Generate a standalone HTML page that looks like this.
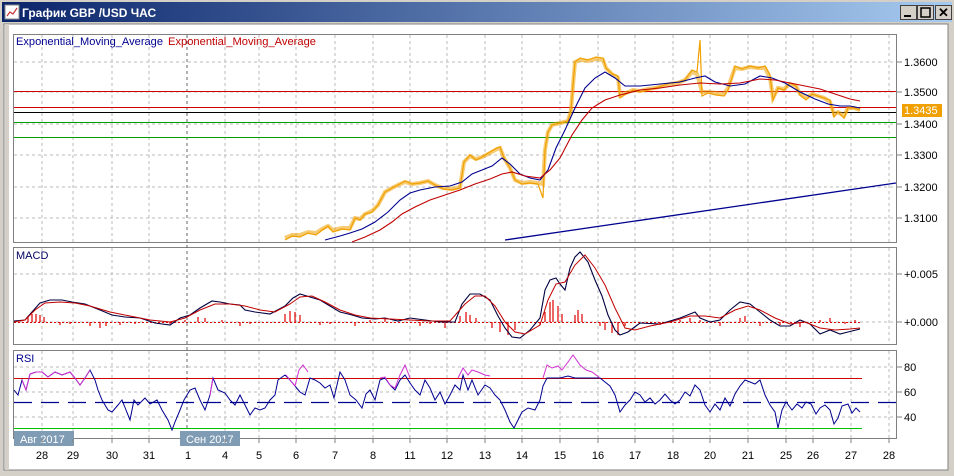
<!DOCTYPE html>
<html><head><meta charset="utf-8"><style>
html,body{margin:0;padding:0;width:954px;height:476px;overflow:hidden;background:#d4d0c8}
svg{display:block}
text{font-family:"Liberation Sans",sans-serif}
</style></head><body>
<svg width="954" height="476" xmlns="http://www.w3.org/2000/svg">
<defs><linearGradient id="tb" x1="0" x2="1"><stop offset="0" stop-color="#0a246a"/><stop offset="1" stop-color="#a6caf0"/></linearGradient></defs>
<rect x="0" y="0" width="954" height="476" fill="#d4d0c8"/>
<rect x="2" y="2" width="950" height="20" fill="url(#tb)"/>
<rect x="5" y="5" width="14" height="14" fill="#fff" stroke="#888"/>
<polyline points="7,16 10,12 13,14 17,8" fill="none" stroke="#c33" stroke-width="1.2"/>
<text x="22" y="17" fill="#fff" font-size="12" font-weight="bold">График GBP /USD  ЧАС</text>
<g font-size="13" font-weight="bold" fill="#000">
<rect x="900.5" y="5.5" width="16" height="14" fill="#d4d0c8" stroke="#404040" stroke-width="1"/><rect x="904" y="15" width="7" height="2" fill="#000"/>
<rect x="917.5" y="5.5" width="16" height="14" fill="#d4d0c8" stroke="#404040"/><rect x="921" y="8" width="9" height="9" fill="none" stroke="#000" stroke-width="1.5"/>
<rect x="935.5" y="5.5" width="16" height="14" fill="#d4d0c8" stroke="#404040"/><text x="938" y="17">✕</text>
</g>
<rect x="4" y="24" width="944" height="446" fill="#fff" stroke="#808080"/>
<rect x="5" y="24" width="4" height="446" fill="#d4d0c8"/>
<g fill="none" stroke="#808080">
<rect x="13.5" y="34.5" width="883" height="208"/>
<rect x="13.5" y="247.5" width="883" height="97"/>
<rect x="13.5" y="350.5" width="883" height="88"/>
</g>
<g stroke="#bbb" stroke-dasharray="3,3">
<path d="M42 35V242M73 35V242M112 35V242M149 35V242M225 35V242M259 35V242M296 35V242M335 35V242M373 35V242M410 35V242M447 35V242M485 35V242M522 35V242M560 35V242M598 35V242M635 35V242M673 35V242M710 35V242M748 35V242M786 35V242M813 35V242M851 35V242M889 35V242"/>
<path d="M42 248V344M73 248V344M112 248V344M149 248V344M225 248V344M259 248V344M296 248V344M335 248V344M373 248V344M410 248V344M447 248V344M485 248V344M522 248V344M560 248V344M598 248V344M635 248V344M673 248V344M710 248V344M748 248V344M786 248V344M813 248V344M851 248V344M889 248V344"/>
<path d="M42 351V438M73 351V438M112 351V438M149 351V438M225 351V438M259 351V438M296 351V438M335 351V438M373 351V438M410 351V438M447 351V438M485 351V438M522 351V438M560 351V438M598 351V438M635 351V438M673 351V438M710 351V438M748 351V438M786 351V438M813 351V438M851 351V438M889 351V438"/>
<path d="M14 62H896M14 92H896M14 124H896M14 155H896M14 187H896M14 218H896"/>
<path d="M14 274H896M14 322H896M14 367H896M14 392H896M14 417H896"/>
</g>
<path d="M187 35V446" stroke="#666" stroke-dasharray="3,3"/>
<g stroke="#808080"><path d="M897 62h5M897 92h5M897 124h5M897 155h5M897 187h5M897 218h5M897 274h5M897 322h5M897 367h5M897 392h5M897 417h5"/></g>
<g font-size="11" fill="#000">
<text x="904" y="66">1.3600</text><text x="904" y="96">1.3500</text><text x="904" y="128">1.3400</text><text x="904" y="159">1.3300</text><text x="904" y="191">1.3200</text><text x="904" y="222">1.3100</text>
<text x="904" y="278">+0.005</text><text x="904" y="326">+0.000</text>
<text x="904" y="371">80</text><text x="904" y="396">60</text><text x="904" y="421">40</text>
</g>
<rect x="902" y="104" width="40" height="13" fill="#f0a000"/>
<text x="904" y="114" font-size="11" fill="#fff">1.3435</text>
<g stroke-width="1">
<path d="M14 91.5H896" stroke="#d00000"/>
<path d="M14 107.5H896" stroke="#d00000"/>
<path d="M14 112.5H896" stroke="#000"/>
<path d="M14 122.5H896" stroke="#00a000"/>
<path d="M14 137.5H896" stroke="#00a000"/>
<path d="M505 240L896 183" stroke="#000090" stroke-width="1.3"/>
</g>
<g fill="none" stroke="#f0a000" stroke-width="1.2">
<polyline stroke-width="4" stroke-opacity="0.55" points="285,238 292,235 300,235 308,232 316,233 322,229 328,226 333,230 342,228 350,228 355,218 360,219 365,214 372,211 378,205 385,192 392,188 398,185 405,182 412,184 420,183 428,181 435,185 443,188 452,189 460,187 464,162 470,156 476,159 482,157 490,153 497,149 500,148 504,158 510,168 515,180 522,183 530,182 538,183 543,184 545,150 548,132 552,125 560,123 568,121 571,110 573,85 575,62 580,60 588,61 596,59 603,60 606,68 612,74 618,78 620,95 626,93 633,90 640,91 648,89 655,88 662,86 670,84 678,83 685,80 692,72 697,74 702,92 708,92 716,93 724,94 728,88 732,76 735,68 742,69 750,67 758,68 765,68 770,78 773,98 778,88 784,89 790,84 796,86 800,94 806,98 812,94 818,96 824,98 830,102 834,114 838,112 844,116 848,108 854,108 860,110"/>
<polyline points="285,240 292,236 300,237 308,233 316,235 322,230 328,226 333,232 342,229 350,230 355,218 360,220 365,214 372,212 378,205 385,192 392,188 398,185 405,181 412,184 420,183 428,181 435,185 443,189 452,190 460,188 464,162 470,155 476,160 482,157 490,152 497,148 500,147 504,158 510,168 515,180 522,184 530,183 538,184 543,198 545,150 548,132 552,125 560,123 568,121 571,110 573,85 575,62 580,58 588,60 596,57 603,58 606,68 612,74 618,76 620,98 626,94 633,90 640,92 648,90 655,88 662,86 670,83 678,82 685,80 692,70 697,72 700,40 702,96 708,93 716,95 724,96 728,90 732,78 735,66 742,69 750,66 758,68 765,66 770,75 773,100 778,88 784,90 790,83 796,86 800,95 806,100 812,94 818,96 824,98 830,100 834,117 838,112 844,118 848,108 854,108 860,110"/>
</g>
<polyline fill="none" stroke="#000090" stroke-width="1.1" points="325,240 340,236 350,233 362,229 375,222 388,212 400,200 410,193 420,190 435,187 450,186 462,182 472,174 482,170 492,166 502,158 510,164 520,174 530,178 540,180 548,170 556,148 565,130 575,108 585,88 595,78 605,72 615,78 625,86 640,86 660,84 680,82 695,78 705,76 715,82 730,86 745,84 760,76 772,78 785,83 800,92 815,99 828,104 840,106 850,106 860,108"/>
<polyline fill="none" stroke="#c00000" stroke-width="1.1" points="352,242 365,237 380,230 392,222 402,214 415,207 430,200 445,195 460,190 475,184 490,179 502,174 512,172 525,176 540,178 550,170 560,158 572,135 582,120 592,108 605,100 620,95 640,90 660,88 680,85 700,83 720,84 740,83 760,79 775,80 790,83 805,86 820,89 835,94 850,99 860,101"/>
<g font-size="11"><text x="16" y="45" fill="#000090" textLength="147" lengthAdjust="spacingAndGlyphs">Exponential_Moving_Average</text><text x="168" y="45" fill="#c00000" textLength="148" lengthAdjust="spacingAndGlyphs">Exponential_Moving_Average</text></g>
<text x="16" y="259" font-size="11" fill="#000060">MACD</text>
<path d="M14 322.5H860" stroke="#e00000" stroke-dasharray="2,2"/>
<g stroke="#e00000" stroke-width="1.2">
<path d="M28 322V316M32 322V314M36 322V314M40 322V315M44 322V317M60 322V325M70 322V324M90 322V326M100 322V328M106 322V326M120 322V325M135 322V324M170 322V324M185 322V320M198 322V317M205 322V318M222 322V320M240 322V326M250 322V324M285 322V314M290 322V311M295 322V312M300 322V315M320 322V325M330 322V324M355 322V326M370 322V320M385 322V318M395 322V322M420 322V326M430 322V324M445 322V328M460 322V316M466 322V312M470 322V315M476 322V318M492 322V328M500 322V332M508 322V335M515 322V330M540 322V325M545 322V312M550 322V302M553 322V300M558 322V306M562 322V314M575 322V315M578 322V310M582 322V314M600 322V326M605 322V330M612 322V333M618 322V335M625 322V326M660 322V325M680 322V320M690 322V318M700 322V320M720 322V326M740 322V318M745 322V316M760 322V326M780 322V325M800 322V327M820 322V320M830 322V318M845 322V324M855 322V320"/>
</g>
<polyline fill="none" stroke="#000040" stroke-width="1.1" points="14,321 25,320 32,312 40,303 50,300 62,300 72,302 85,304 100,310 112,315 125,317 140,318 155,323 170,325 180,318 190,315 200,308 212,301 220,302 230,304 240,305 245,310 255,312 270,314 285,306 293,298 300,294 310,297 320,300 330,306 340,312 352,315 362,318 375,319 385,318 398,321 410,318 425,320 440,322 455,322 462,304 470,294 480,294 490,300 498,316 505,328 512,337 520,338 530,330 540,318 545,290 550,280 556,278 560,284 565,290 570,268 575,257 580,252 588,262 595,280 602,296 608,315 615,330 620,335 628,332 640,323 660,324 680,318 695,312 700,318 710,322 720,320 730,310 740,302 750,304 760,312 770,320 780,326 790,326 800,320 810,324 820,334 830,330 840,334 848,332 860,329"/>
<polyline fill="none" stroke="#c00000" stroke-width="1" points="14,322 25,320 35,310 45,303 60,302 75,303 90,306 110,312 130,316 150,320 170,322 185,318 200,310 215,304 230,304 245,306 260,310 275,312 290,304 300,297 312,296 325,302 340,310 355,315 370,318 390,319 410,320 430,321 450,321 465,304 475,296 485,296 495,306 505,322 515,332 525,334 540,325 548,300 556,284 565,282 575,265 585,255 595,268 605,285 615,308 625,328 635,330 650,326 670,322 690,316 705,316 720,318 735,310 748,306 760,310 775,318 790,324 805,322 820,328 835,330 850,329 860,328"/>
<text x="16" y="362" font-size="11" fill="#000090">RSI</text>
<path d="M14 378.5H862" stroke="#d00000"/>
<path d="M14 402.5H896" stroke="#000090" stroke-width="1.2" stroke-dasharray="18,9"/>
<path d="M14 428.5H862" stroke="#00c000"/>
<polyline fill="none" stroke="#000090" stroke-width="1" points="14,390 18,395 22,380 26,390 30,374 36,372 42,372 48,377 55,372 62,375 70,372 75,378 80,385 85,378 90,370 95,380 98,390 102,400 108,410 112,412 118,405 122,400 126,410 130,420 134,400 138,405 145,398 150,404 157,400 162,410 168,420 172,430 175,422 180,410 184,400 190,390 195,388 200,400 205,410 210,395 213,378 218,390 225,393 230,400 235,405 240,395 245,405 250,415 255,408 260,410 265,408 270,400 275,395 278,380 285,375 290,380 295,386 300,392 305,395 310,378 315,380 320,383 325,388 330,385 334,398 340,372 345,380 350,395 356,400 362,408 366,394 370,390 375,400 380,380 385,378 390,385 395,390 400,380 405,375 410,383 415,390 420,395 425,380 430,388 435,400 440,392 445,404 450,395 455,385 460,390 463,375 468,390 472,380 478,395 485,385 490,388 495,395 500,400 505,410 510,422 514,428 518,420 522,412 528,408 535,410 540,400 543,386 547,378 560,378 568,376 575,378 585,378 595,378 600,378 605,382 610,386 615,395 620,412 625,405 630,400 635,392 640,395 645,402 650,398 655,404 660,400 665,394 670,400 675,404 680,400 685,392 690,396 695,385 700,390 705,405 710,412 715,404 720,410 725,398 730,406 735,394 740,386 745,380 750,382 755,384 760,380 765,395 770,405 775,412 778,428 782,410 786,402 792,410 797,404 802,408 806,402 811,404 816,414 820,408 825,405 830,410 834,424 838,418 842,406 848,404 852,413 856,408 860,412"/>
<g fill="none" stroke="#d030d0" stroke-width="1"><polyline points="22,380 26,390 30,374 36,372 42,372 48,377 55,372 62,375 70,372 75,378 80,385 85,378 90,370"/><polyline points="210,395 213,378"/><polyline points="286,375 290,380 295,386 299,370 303,365 308,372"/><polyline points="380,378 385,377 390,385 395,388 400,375 405,365 410,378"/><polyline points="458,378 463,368 468,375 472,370 478,372 485,375 490,376"/><polyline points="543,378 547,365 552,368 558,366 562,370 568,362 573,355 580,365 586,370 592,372 600,378"/></g>
<rect x="14" y="431" width="60" height="15" fill="#7f9cb4"/><text x="20" y="443" font-size="11" fill="#fff">Авг 2017</text>
<rect x="180" y="431" width="60" height="15" fill="#7f9cb4"/><text x="186" y="443" font-size="11" fill="#fff">Сен 2017</text>
<g stroke="#808080"><path d="M42 439v4M73 439v4M112 439v4M149 439v4M225 439v4M259 439v4M296 439v4M335 439v4M373 439v4M410 439v4M447 439v4M485 439v4M522 439v4M560 439v4M598 439v4M635 439v4M673 439v4M710 439v4M748 439v4M786 439v4M813 439v4M851 439v4M889 439v4"/></g>
<g font-size="11" fill="#000" text-anchor="middle">
<text x="42" y="459">28</text><text x="73" y="459">29</text><text x="112" y="459">30</text><text x="149" y="459">31</text><text x="188" y="459">1</text><text x="225" y="459">4</text><text x="259" y="459">5</text><text x="296" y="459">6</text><text x="335" y="459">7</text><text x="373" y="459">8</text><text x="410" y="459">11</text><text x="447" y="459">12</text><text x="485" y="459">13</text><text x="522" y="459">14</text><text x="560" y="459">15</text><text x="598" y="459">16</text><text x="635" y="459">17</text><text x="673" y="459">18</text><text x="710" y="459">20</text><text x="748" y="459">21</text><text x="786" y="459">25</text><text x="813" y="459">26</text><text x="851" y="459">27</text><text x="889" y="459">28</text>
</g>
</svg>
</body></html>
